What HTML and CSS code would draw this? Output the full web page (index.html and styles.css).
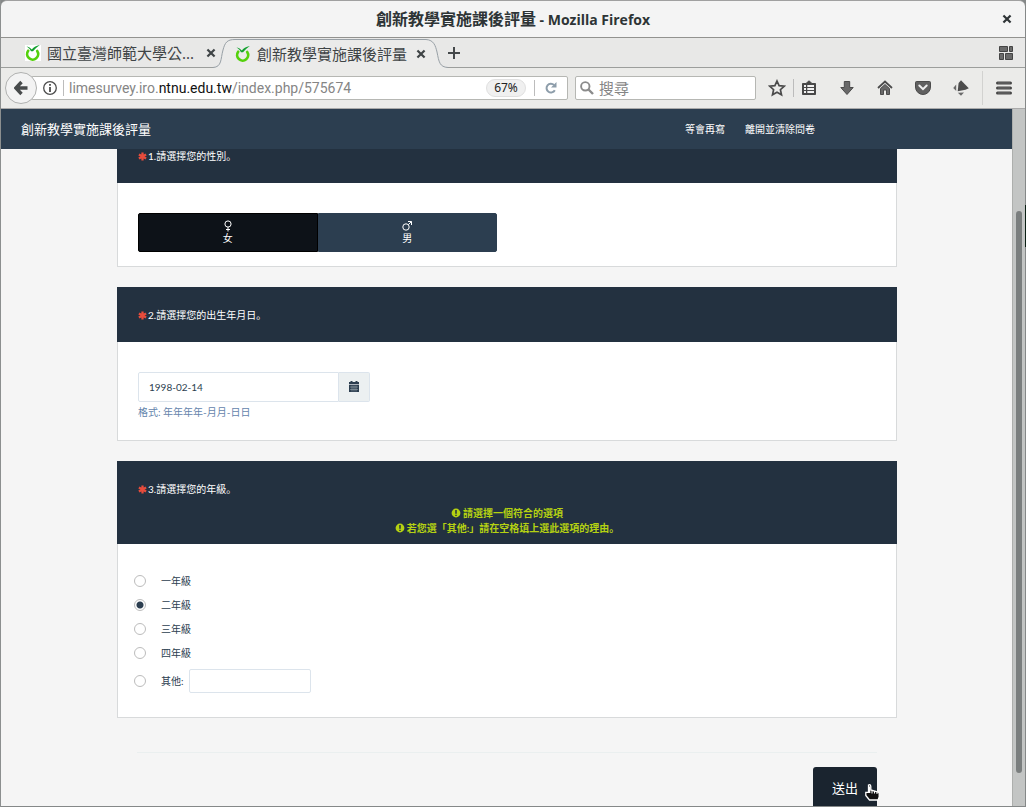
FILE: index.html
```html
<!DOCTYPE html>
<html lang="zh-Hant">
<head>
<meta charset="utf-8">
<meta name="viewport" content="width=device-width, initial-scale=1">
<title>創新教學實施課後評量</title>
<link rel="stylesheet" href="styles.css">
</head>
<body>
<svg class="defs" aria-hidden="true">
  <symbol id="lime" viewBox="0 0 16 16">
    <path d="M3.200 5.800A5.500 5.500 0 1 0 12.200 6" fill="none" stroke="#54d10c" stroke-width="2.700" stroke-linecap="round"/>
    <path d="M1.500 1.200Q5 2 6.800 4.500Q9 1 14.800 0Q10.600 3 8 6.200H6Q4.400 3.200 1.500 1.200Z" fill="#12a12e"/>
  </symbol>
  <symbol id="cross" viewBox="0 0 10 10">
    <path d="M2.200 2.200 7.800 7.800M7.800 2.200 2.200 7.800" fill="none" stroke="currentColor" stroke-width="2.200" stroke-linecap="square"/>
  </symbol>
  <symbol id="asterisk" viewBox="0 0 10 10">
    <path d="M5 .5V9.500M1 2.700 9 7.300M9 2.700 1 7.300" fill="none" stroke="currentColor" stroke-width="2.500"/>
  </symbol>
  <symbol id="alert" viewBox="0 0 10 10">
    <circle cx="5" cy="5" r="4.400" fill="currentColor"/>
    <path d="M5 2V5.800M5 6.700V8" stroke="#233140" stroke-width="1.500"/>
  </symbol>
</svg>

<div class="window">
  <header class="titlebar">
    <h1 class="window-title"><span class="window-title-cjk">創新教學實施課後評量</span> - Mozilla Firefox</h1>
    <button class="window-close" type="button" aria-label="Close window"><svg class="icon-close"><use href="#cross"/></svg></button>
  </header>

  <div class="tabs">
    <div class="tab">
      <svg class="favicon favicon-boxed"><use href="#lime"/></svg>
      <span class="tab-label">國立臺灣師範大學公...</span>
      <button class="tab-close" type="button" aria-label="Close tab"><svg class="icon-close"><use href="#cross"/></svg></button>
    </div>
    <div class="tab tab-active">
      <svg class="tab-edge tab-edge-left" viewBox="0 0 19 29"><path class="edge-fill" d="M-3 29.500C6 29 4.500 21 7 12C9 4.500 11 2.500 19 1.500V30H-3Z"/><path class="edge-line" d="M-3 29.500C6 29 4.500 21 7 12C9 4.500 11 1.500 19 1.500"/></svg>
      <div class="tab-middle">
        <svg class="favicon"><use href="#lime"/></svg>
        <span class="tab-label">創新教學實施課後評量</span>
        <button class="tab-close" type="button" aria-label="Close tab"><svg class="icon-close"><use href="#cross"/></svg></button>
      </div>
      <svg class="tab-edge tab-edge-right" viewBox="0 0 22 29"><path class="edge-fill" d="M0 1.500C8 2 9.500 8 11 14C13 24 13.500 29 22 29.500V30H0Z"/><path class="edge-line" d="M0 1.500C8 2 9.500 8 11 14C13 24 13.500 29 22 29.500"/></svg>
    </div>
    <button class="tab-new" type="button" aria-label="New tab"><svg width="12" height="12" viewBox="0 0 12 12"><path d="M6 0V12M0 6H12" stroke="#44484a" stroke-width="2"/></svg></button>
    <button class="tab-groups" type="button" aria-label="Tab groups"><svg width="14" height="14" viewBox="0 0 14 14"><g fill="#6a6a6a" stroke="#444" stroke-width="1"><path d="M.5.500h8v5h-8zM10.500.500h3v5h-3zM.5 7.500h4v6h-4zM6.500 7.500h7v6h-7z"/></g></svg></button>
  </div>

  <div class="toolbar">
    <button class="back" type="button" aria-label="Back"><svg width="14" height="16" viewBox="0 0 14 16"><path d="M7.500 2 1.800 8 7.500 14M2.500 8H13.500" fill="none" stroke="#484b4c" stroke-width="3.400"/></svg></button>
    <div class="address">
      <svg class="info" viewBox="0 0 14 14"><circle cx="7" cy="7" r="6.300" fill="none" stroke="#4c4c4c" stroke-width="1.300"/><path d="M7 3V4.800M7 6V11" stroke="#4c4c4c" stroke-width="1.800"/></svg>
      <span class="rule"></span>
      <div class="url" role="textbox" aria-label="Address" contenteditable="true" spellcheck="false">limesurvey.iro.<span class="url-domain">ntnu.edu.tw</span>/index.php/575674</div>
      <button class="zoom" type="button">67%</button>
      <span class="rule rule-reload"></span>
      <button class="reload" type="button" aria-label="Reload"><svg width="12" height="12" viewBox="0 0 12 12"><path d="M9.800 8.200A4.400 4.400 0 1 1 9 2.900" fill="none" stroke="#8d9daa" stroke-width="2"/><path d="M11.500 0V5.500H6Z" fill="#8d9daa"/></svg></button>
    </div>
    <label class="search">
      <svg width="14" height="14" viewBox="0 0 14 14"><circle cx="5.300" cy="5.300" r="4.200" fill="none" stroke="#8b8b8b" stroke-width="1.900"/><path d="M8.500 8.500 13 13" stroke="#8b8b8b" stroke-width="2.400"/></svg>
      <input class="search-input" type="search" placeholder="搜尋" aria-label="搜尋">
    </label>
    <button class="tool tool-star" type="button" aria-label="Bookmark"><svg width="18" height="18" viewBox="0 0 18 18"><path d="M9 2 11.100 6.700 16.200 7.200 12.400 10.700 13.500 15.800 9 13.200 4.500 15.800 5.600 10.700 1.800 7.200 6.900 6.700Z" fill="none" stroke="#4b4b4b" stroke-width="1.700"/></svg></button>
    <span class="rule"></span>
    <button class="tool tool-list" type="button" aria-label="Bookmarks"><svg width="16" height="16" viewBox="0 0 16 16"><path d="M1.500 3.500H5L8 .8 11 3.500H14.500V14.500H1.500Z" fill="#484848" stroke="#484848" stroke-linejoin="round"/><path d="M3 6H5M6.300 6H13M3 9H5M6.300 9H13M3 12H5M6.300 12H13" stroke="#f2f2f2" stroke-width="1.800"/></svg></button>
    <button class="tool" type="button" aria-label="Downloads"><svg width="16" height="16" viewBox="0 0 16 16"><path d="M5.300 1.500H10.700V7.500H14.200L8 14.500 1.800 7.500H5.300Z" fill="#686868" stroke="#4b4b4b"/></svg></button>
    <button class="tool" type="button" aria-label="Home"><svg width="16" height="16" viewBox="0 0 16 16"><path d="M1 8 8 1.500 15 8" fill="none" stroke="#4b4b4b" stroke-width="1.800"/><path d="M3.500 8.600 8 4.500 12.500 8.600V14.500H9.500V10H6.500V14.500H3.500Z" fill="#686868" stroke="#4b4b4b"/></svg></button>
    <button class="tool" type="button" aria-label="Pocket"><svg width="16" height="16" viewBox="0 0 16 16"><path d="M1.500 1.500H14.500Q15.500 1.500 15.500 2.500V7A7.500 7.500 0 0 1 .5 7V2.500Q.5 1.500 1.500 1.500Z" fill="#606060" stroke="#4b4b4b"/><path d="M4.300 5.500 8 9.200 11.700 5.500" fill="none" stroke="#eee" stroke-width="2" stroke-linecap="round"/></svg></button>
    <button class="tool" type="button" aria-label="Extension"><svg width="16" height="16" viewBox="0 0 16 16"><path d="M8 .3 15.800 8.200 12.500 9.800 4.700 11.200 5.600 3Z" fill="#4c4c4c"/><path d="M3.200 4.600V11L.2 8ZM4.800 12.800 11 12.400 8 15.800Z" fill="#6a6a6a"/></svg></button>
    <span class="rule rule-menu"></span>
    <button class="tool tool-menu" type="button" aria-label="Menu"><svg width="16" height="14" viewBox="0 0 16 14"><path d="M1.500 2H14.500M1.500 7H14.500M1.500 12H14.500" stroke="#484848" stroke-width="3" stroke-linecap="round"/><path d="M2 2H14M2 7H14M2 12H14" stroke="#6c6c6c" stroke-width="1"/></svg></button>
  </div>

  <div class="viewport">
    <div class="page">
      <nav class="navbar">
        <a class="brand" href="#survey">創新教學實施課後評量</a>
        <a class="nav-link" href="#later">等會再寫</a>
        <a class="nav-link" href="#exit">離開並清除問卷</a>
      </nav>

      <form class="survey" id="survey" lang="zh-Hans">
        <section class="card">
          <div class="card-head"><h2 class="question"><svg class="required"><use href="#asterisk"/></svg>1.請選擇您的性別。</h2></div>
          <div class="card-body card-body-gender">
            <div class="gender">
              <button class="gender-option gender-selected" type="button" aria-pressed="true"><svg width="10" height="12" viewBox="0 0 10 12"><circle cx="5" cy="4" r="3.100" fill="none" stroke="currentColor"/><path d="M5 7V11.500M3 9.500H7" stroke="currentColor"/></svg>女</button>
              <button class="gender-option" type="button" aria-pressed="false"><svg width="10" height="12" viewBox="0 0 10 12"><circle cx="4" cy="7" r="3.200" fill="none" stroke="currentColor"/><path d="M6.300 4.700 9.300 1.700M6 1.500H9.500V5" fill="none" stroke="currentColor"/></svg>男</button>
            </div>
          </div>
        </section>

        <section class="card">
          <div class="card-head"><h2 class="question"><svg class="required"><use href="#asterisk"/></svg>2.請選擇您的出生年月日。</h2></div>
          <div class="card-body card-body-date">
            <div class="date">
              <input class="date-input" type="text" value="1998-02-14" aria-label="請選擇您的出生年月日" aria-describedby="date-help">
              <button class="date-button" type="button" aria-label="Calendar"><svg width="10" height="12" viewBox="0 0 10 12"><path d="M0 1H10V11H0Z" fill="#2c3e50"/><path d="M2.500 0V2M7.500 0V2" stroke="#2c3e50" stroke-width="2"/><path d="M0 3.500H10" stroke="#e6eaec" stroke-width=".700"/><path d="M1 6H9M1 8.500H9M3 4.500V10.500M5 4.500V10.500M7 4.500V10.500" stroke="#aab4ba" stroke-width=".500"/></svg></button>
            </div>
            <p class="help" id="date-help">格式: 年年年年-月月-日日</p>
          </div>
        </section>

        <section class="card">
          <div class="card-head card-head-tips">
            <h2 class="question"><svg class="required"><use href="#asterisk"/></svg>3.請選擇您的年級。</h2>
            <div class="tips">
              <p class="tip"><svg class="tip-icon"><use href="#alert"/></svg>請選擇一個符合的選項</p>
              <p class="tip"><svg class="tip-icon"><use href="#alert"/></svg>若您選「其他:」請在空格填上選此選項的理由。</p>
            </div>
          </div>
          <div class="card-body card-body-options">
            <label class="option"><input class="radio" type="radio" name="grade">一年級</label>
            <label class="option"><input class="radio" type="radio" name="grade" checked>二年級</label>
            <label class="option"><input class="radio" type="radio" name="grade">三年級</label>
            <label class="option"><input class="radio" type="radio" name="grade">四年級</label>
            <div class="option option-other"><input class="radio" type="radio" name="grade" id="other"><label for="other">其他:</label><input class="other-input" type="text" aria-label="其他"></div>
          </div>
        </section>

        <div class="actions">
          <button class="submit" type="button">送出<svg class="pointer" width="15" height="17" viewBox="0 0 15 17"><path d="M3.500 1Q5.500 0 5.800 2.500V6L13 8Q14.300 8.600 14.200 10V13L13 16H4.500L.8 11.500V8.300H3.500Z" fill="#111" stroke="#fff" stroke-width="1.300"/><path d="M4.500 2.500V9" fill="none" stroke="#fff" stroke-width="1.600"/><path d="M7 6.500V9.500M9.500 7V9.500M12 8V10" fill="none" stroke="#fff"/></svg></button>
        </div>
      </form>
    </div>
    <div class="scrollbar"><div class="thumb"></div></div>
  </div>
</div>
</body>
</html>
```

FILE: styles.css
```css
* { box-sizing: border-box; }

body {
  margin: 0;
  background: linear-gradient(#858888 205px, #0b2014 205px, #0b2014 247px, #858888 247px);
  color: #2c3e50;
  font: 10px/15px Lato, "Noto Sans CJK TC", sans-serif;
}

button {
  display: flex;
  align-items: center;
  justify-content: center;
  padding: 0;
  border: 0;
  background: none;
  color: inherit;
  font: inherit;
}

input { font: inherit; color: inherit; }
h1, h2, p { margin: 0; font: inherit; }
svg { flex: none; }
.defs { position: absolute; width: 0; height: 0; }

/* Browser window */
.window {
  display: flex;
  flex-direction: column;
  height: 100vh;
  padding: 0 1px 1px 0;
  border-left: 1px solid #8c8f8f;
  overflow: hidden;
}

.titlebar {
  display: grid;
  grid-template-columns: 36px 1fr 36px;
  align-items: center;
  flex: none;
  height: 38px;
  border-top: 1px solid #a0a0a0;
  border-bottom: 1px solid #92928f;
  border-radius: 6px 6px 0 0;
  background: #f4f4f4;
  color: #2e3436;
}

.window-title {
  grid-column: 2;
  text-align: center;
  font: bold 14px/20px "Open Sans", "Noto Sans CJK TC", sans-serif;
}

.window-title-cjk { font-size: 16px; }
.window-close { height: 36px; }
.icon-close { width: 10px; height: 10px; }

.tabs {
  display: flex;
  flex: none;
  height: 30px;
  padding-left: 24px;
  border-bottom: 1px solid #9c9e9c;
  background: #e8e8e7;
  color: #3f4446;
  font: 15px/20px "Noto Sans", "Noto Sans CJK TC", sans-serif;
}

.tab { display: flex; align-items: center; gap: 6px; padding-top: 1px; }
.tab-label { width: 150px; white-space: nowrap; }
.tab-close { margin-left: 3px; }
.tab-active { gap: 0; height: 30px; padding-top: 0; position: relative; }
.tab-middle {
  display: flex;
  align-items: center;
  gap: 6px;
  height: 30px;
  border-top: 1px solid #e8e8e7;
  background: linear-gradient(#98a0a6 1px, #ebebea 1px);
}
.tab-edge { height: 29px; align-self: flex-start; overflow: visible; }
.tab-edge-left { width: 19px; }
.tab-edge-right { width: 22px; }
.edge-fill { fill: #ebebea; }
.edge-line { fill: none; stroke: #98a0a6; }
.favicon { width: 16px; height: 16px; }
.favicon-boxed { background: #fff; }
.tab-groups { margin-left: auto; padding: 0 12px; }

.toolbar {
  display: flex;
  align-items: center;
  flex: none;
  height: 41px;
  padding-left: 4px;
  border-bottom: 1px solid #aaa;
  background: #ebebe9;
}

.back {
  position: relative;
  flex: none;
  width: 32px;
  height: 32px;
  border: 1px solid #b0b1b0;
  border-radius: 50%;
  background: #f3f3f3;
}

.address, .search {
  display: flex;
  align-items: center;
  height: 24px;
  border: 1px solid #b6b7b3;
  border-radius: 2px;
  background: #fff;
  font: 14px/20px "Noto Sans", "Noto Sans CJK TC", sans-serif;
}

.address { flex: 1; min-width: 0; margin-left: -6px; padding-left: 11px; }
.info { width: 14px; height: 14px; }
.rule { flex: none; width: 1px; height: 18px; background: #bcbcbc; }
.address .rule { height: 16px; margin: 0 5px 0 6px; }
.url { flex: 1; overflow: hidden; white-space: nowrap; color: #858585; outline: 0; font-family: Roboto, sans-serif; }
.url-domain { color: #111; }
.zoom { width: 40px; height: 18px; border: 1px solid #e0e0e0; border-radius: 9px; background: #f0f0f0; color: #222; font-size: 12px; }
.address .rule-reload { margin: 0 0 0 8px; }
.reload { width: 32px; height: 22px; }
.search { width: 181px; margin-left: 7px; padding-left: 4px; gap: 5px; }
.search-input { width: 100%; min-width: 0; padding: 0; border: 0; outline: 0; background: none; font-size: 15px; }
.search-input::placeholder { color: #858585; opacity: 1; }
.tool { flex: none; width: 38px; height: 32px; }
.tool-star { width: 32px; margin-left: 5px; }
.tool-list { width: 34px; padding-right: 4px; }
.rule-menu { height: 34px; margin-left: 2px; background: #d2d2d0; }
.tool-menu { width: 42px; }

/* Survey page */
.viewport { display: flex; flex: 1; min-height: 0; }
.page { position: relative; flex: 1; padding-left: 1px; overflow: hidden; background: #f5f5f5; }

.navbar {
  position: absolute;
  inset: 0 0 auto;
  z-index: 1;
  display: flex;
  align-items: center;
  gap: 20px;
  height: 40px;
  padding: 0 197px 0 20px;
  background: #2c3e50;
}

.brand, .nav-link { color: #fff; text-decoration: none; }
.brand { margin-right: auto; font-size: 13px; }

.survey { max-width: 780px; margin: 0 auto; padding-top: 19px; font-family: Lato, "Noto Sans CJK SC", sans-serif; }
.card { margin-bottom: 20px; border: 1px solid #d8dadb; border-top: 0; background: #fff; }
.card-head { margin: 0 -1px; padding: 21px 21px 19px; background: #233140; color: #fff; }
.card-head-tips { padding-bottom: 8px; }
.required { width: 9px; height: 9px; margin-right: 1px; color: #e74c3c; vertical-align: -1px; }
.tips { margin-top: 9px; color: #b5d112; font-weight: bold; text-align: center; }
.tip-icon { width: 10px; height: 10px; margin-right: 2px; vertical-align: -1px; }

.card-body { padding: 30px 20px 20px; }
.card-body-gender { padding-bottom: 14px; }
.gender { display: flex; width: 359px; max-width: 100%; }
.gender-option {
  flex: 1 1 0;
  flex-direction: column;
  height: 39px;
  border: 1px solid #2c3e50;
  border-radius: 0 2px 2px 0;
  background: #2c3e50;
  color: #fff;
  line-height: 13px;
}
.gender-selected { border-color: #000; border-radius: 2px 0 0 2px; background: #0d1218; }

.date { display: flex; width: 232px; height: 30px; }
.date-input { flex: 1; min-width: 0; padding: 0 10px; border: 1px solid #dce4ec; border-radius: 2px 0 0 2px; background: #fff; }
.date-button { width: 31px; border: 1px solid #dce4ec; border-left: 0; border-radius: 0 2px 2px 0; background: #ecf0f1; }
.help { margin-top: 3px; color: #6484ac; }

.card-body-options { padding: 25px 16px 24px; }
.option { display: flex; align-items: center; height: 24px; }
.option-other { margin-top: 4px; }
.radio {
  appearance: none;
  width: 12px;
  height: 12px;
  margin: 0 15px 0 0;
  border: 1px solid #bcbcbc;
  border-radius: 50%;
  background: #fff;
}
.radio:checked { background: radial-gradient(circle, #2c3e50 3px, #fff 4px); }
.other-input { width: 122px; height: 24px; margin-left: 5px; padding: 0 6px; border: 1px solid #dce4ec; border-radius: 2px; }

.actions { display: flex; justify-content: flex-end; margin: 34px 20px 0; padding-top: 14px; border-top: 1px solid #eaefef; }
.submit { position: relative; width: 64px; height: 43px; border-radius: 3px; background: #1a242f; color: #fff; font-size: 13px; }
.pointer { position: absolute; top: 17px; right: -3px; }

.scrollbar {
  display: grid;
  grid-template-rows: 102fr 562fr 33fr;
  width: 13px;
  padding: 0 3px;
  border-left: 1px solid #adafad;
  background: #c3c5c4;
}
.thumb { grid-row: 2; border-radius: 3px; background: #7a7e7e; }
```
